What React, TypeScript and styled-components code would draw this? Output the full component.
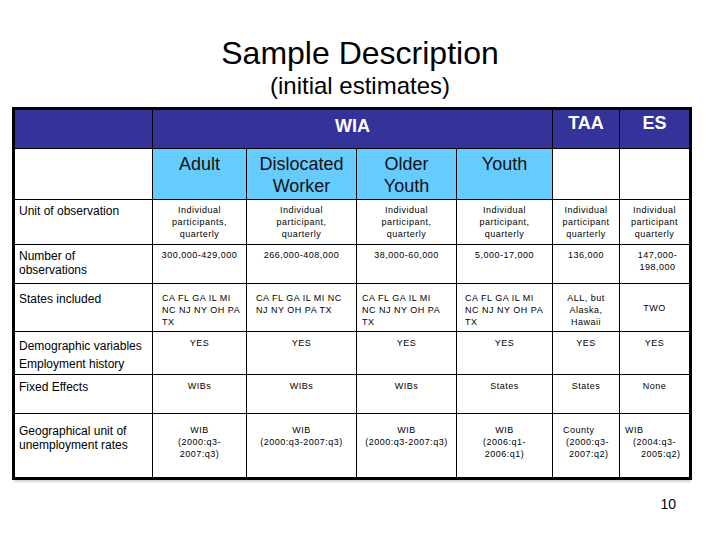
import React from "react";
import styled, { createGlobalStyle } from "styled-components";

const Global = createGlobalStyle`
  html, body { margin: 0; padding: 0; background: #ffffff; }
  body { font-family: "Liberation Sans", Arial, sans-serif; color: #000; }
`;

const Slide = styled.div`
  width: 720px;
  height: 540px;
  box-sizing: border-box;
  padding-top: 34px;
  display: flex;
  flex-direction: column;
  align-items: stretch;
`;

const Title = styled.h1`
  margin: 0;
  font-size: 32px;
  line-height: 38px;
  font-weight: normal;
  text-align: center;
`;

const Subtitle = styled.h2`
  margin: 0;
  font-size: 24px;
  line-height: 28px;
  font-weight: normal;
  text-align: center;
`;

const TableWrap = styled.div`
  margin: 7px 0 0 12px;
  width: 677px;
  box-shadow: 2px 2px 2px rgba(0, 0, 0, 0.18);
`;

const Table = styled.table`
  width: 677px;
  border-collapse: collapse;
  table-layout: fixed;
  border: 3px solid #000;
`;

const HeadRow = styled.tr<{ h: number }>`
  height: ${(p) => p.h}px;
`;

const HeadCell = styled.th<{ pt?: number }>`
  background: #333399;
  color: #ffffff;
  border: 1px solid #000;
  font-size: 18px;
  line-height: 22px;
  font-weight: bold;
  text-align: center;
  vertical-align: top;
  padding: ${(p) => p.pt ?? 2}px 0 0 0;
`;

const SubCell = styled.th<{ blank?: boolean }>`
  background: ${(p) => (p.blank ? "#ffffff" : "#66ccff")};
  border: 1px solid #000;
  font-size: 18px;
  line-height: 22px;
  font-weight: normal;
  color: #111;
  text-align: center;
  vertical-align: top;
  padding: 4px 0 0 0;
`;

const Row = styled.tr<{ h: number; pt?: number }>`
  height: ${(p) => p.h}px;
  & > td {
    padding-top: ${(p) => p.pt ?? 5}px;
  }
`;

const LabelCell = styled.td<{ lh?: number }>`
  border: 1px solid #000;
  font-size: 12px;
  line-height: ${(p) => p.lh ?? 14}px;
  vertical-align: top;
  text-align: left;
  padding: 4px 2px 0 4px;
`;

const DataCell = styled.td<{ align?: "left" | "center"; pl?: number }>`
  border: 1px solid #000;
  font-size: 9px;
  letter-spacing: 0.5px;
  line-height: 12px;
  text-align: ${(p) => p.align ?? "center"};
  vertical-align: top;
  padding: 5px 2px 0 ${(p) => p.pl ?? 2}px;
`;

const MiddleCell = styled(DataCell)`
  vertical-align: middle;
  tr > & {
    padding-top: 0;
  }
`;

const Line = styled.div<{ indent?: number }>`
  padding-left: ${(p) => p.indent ?? 0}px;
  white-space: nowrap;
`;

const Footer = styled.div`
  margin-top: 15px;
  padding-right: 44px;
  text-align: right;
  font-size: 14px;
  line-height: 18px;
`;

const states = ["CA FL GA IL MI", "NC NJ NY OH PA", "TX"];

const Lines: React.FC<{ items: string[]; indents?: number[] }> = ({ items, indents }) => (
  <>
    {items.map((t, i) => (
      <Line key={i} indent={indents ? indents[i] : 0}>
        {t}
      </Line>
    ))}
  </>
);

export default function App() {
  return (
    <>
      <Global />
      <Slide>
        <Title>Sample Description</Title>
        <Subtitle>(initial estimates)</Subtitle>
        <TableWrap>
          <Table>
            <colgroup>
              <col style={{ width: 139 }} />
              <col style={{ width: 94 }} />
              <col style={{ width: 110 }} />
              <col style={{ width: 100 }} />
              <col style={{ width: 96 }} />
              <col style={{ width: 67 }} />
              <col style={{ width: 71 }} />
            </colgroup>
            <thead>
              <HeadRow h={40}>
                <HeadCell />
                <HeadCell colSpan={4} pt={5}>
                  WIA
                </HeadCell>
                <HeadCell pt={2}>TAA</HeadCell>
                <HeadCell pt={2}>ES</HeadCell>
              </HeadRow>
              <HeadRow h={51}>
                <SubCell blank />
                <SubCell>Adult</SubCell>
                <SubCell>
                  Dislocated
                  <br />
                  Worker
                </SubCell>
                <SubCell>
                  Older
                  <br />
                  Youth
                </SubCell>
                <SubCell>Youth</SubCell>
                <SubCell blank />
                <SubCell blank />
              </HeadRow>
            </thead>
            <tbody>
              <Row h={45} pt={4}>
                <LabelCell>Unit of observation</LabelCell>
                <DataCell>
                  <Lines items={["Individual", "participants,", "quarterly"]} />
                </DataCell>
                <DataCell>
                  <Lines items={["Individual", "participant,", "quarterly"]} />
                </DataCell>
                <DataCell>
                  <Lines items={["Individual", "participant,", "quarterly"]} />
                </DataCell>
                <DataCell>
                  <Lines items={["Individual", "participant,", "quarterly"]} />
                </DataCell>
                <DataCell>
                  <Lines items={["Individual", "participant", "quarterly"]} />
                </DataCell>
                <DataCell>
                  <Lines items={["Individual", "participant", "quarterly"]} />
                </DataCell>
              </Row>
              <Row h={39} pt={4}>
                <LabelCell>
                  Number of
                  <br />
                  observations
                </LabelCell>
                <DataCell>300,000-429,000</DataCell>
                <DataCell>266,000-408,000</DataCell>
                <DataCell>38,000-60,000</DataCell>
                <DataCell>5,000-17,000</DataCell>
                <DataCell>136,000</DataCell>
                <DataCell pl={8}>
                  <Lines items={["147,000-", "198,000"]} />
                </DataCell>
              </Row>
              <Row h={48} pt={8}>
                <LabelCell>States included</LabelCell>
                <DataCell align="left" pl={9}>
                  <Lines items={states} />
                </DataCell>
                <DataCell align="left" pl={9}>
                  <Lines items={["CA FL GA IL MI NC", "NJ NY OH PA TX"]} />
                </DataCell>
                <DataCell align="left" pl={5}>
                  <Lines items={states} />
                </DataCell>
                <DataCell align="left" pl={8}>
                  <Lines items={states} />
                </DataCell>
                <DataCell>
                  <Lines items={["ALL, but", "Alaska,", "Hawaii"]} />
                </DataCell>
                <MiddleCell>TWO</MiddleCell>
              </Row>
              <Row h={43} pt={5}>
                <LabelCell lh={18}>
                  Demographic variables
                  <br />
                  Employment history
                </LabelCell>
                <DataCell>YES</DataCell>
                <DataCell>YES</DataCell>
                <DataCell>YES</DataCell>
                <DataCell>YES</DataCell>
                <DataCell>YES</DataCell>
                <DataCell>YES</DataCell>
              </Row>
              <Row h={39} pt={5}>
                <LabelCell>Fixed Effects</LabelCell>
                <DataCell>WIBs</DataCell>
                <DataCell>WIBs</DataCell>
                <DataCell>WIBs</DataCell>
                <DataCell>States</DataCell>
                <DataCell>States</DataCell>
                <DataCell>None</DataCell>
              </Row>
              <Row h={65} pt={10}>
                <LabelCell>
                  Geographical unit of
                  <br />
                  unemployment rates
                </LabelCell>
                <DataCell>
                  <Lines items={["WIB", "(2000:q3-", "2007:q3)"]} />
                </DataCell>
                <DataCell>
                  <Lines items={["WIB", "(2000:q3-2007:q3)"]} />
                </DataCell>
                <DataCell>
                  <Lines items={["WIB", "(2000:q3-2007:q3)"]} />
                </DataCell>
                <DataCell>
                  <Lines items={["WIB", "(2006:q1-", "2006:q1)"]} />
                </DataCell>
                <DataCell align="left" pl={10}>
                  <Lines items={["County", "(2000:q3-", "2007:q2)"]} indents={[0, 3, 6]} />
                </DataCell>
                <DataCell align="left" pl={5}>
                  <Lines items={["WIB", "(2004:q3-", "2005:q2)"]} indents={[0, 8, 16]} />
                </DataCell>
              </Row>
            </tbody>
          </Table>
        </TableWrap>
        <Footer>10</Footer>
      </Slide>
    </>
  );
}
